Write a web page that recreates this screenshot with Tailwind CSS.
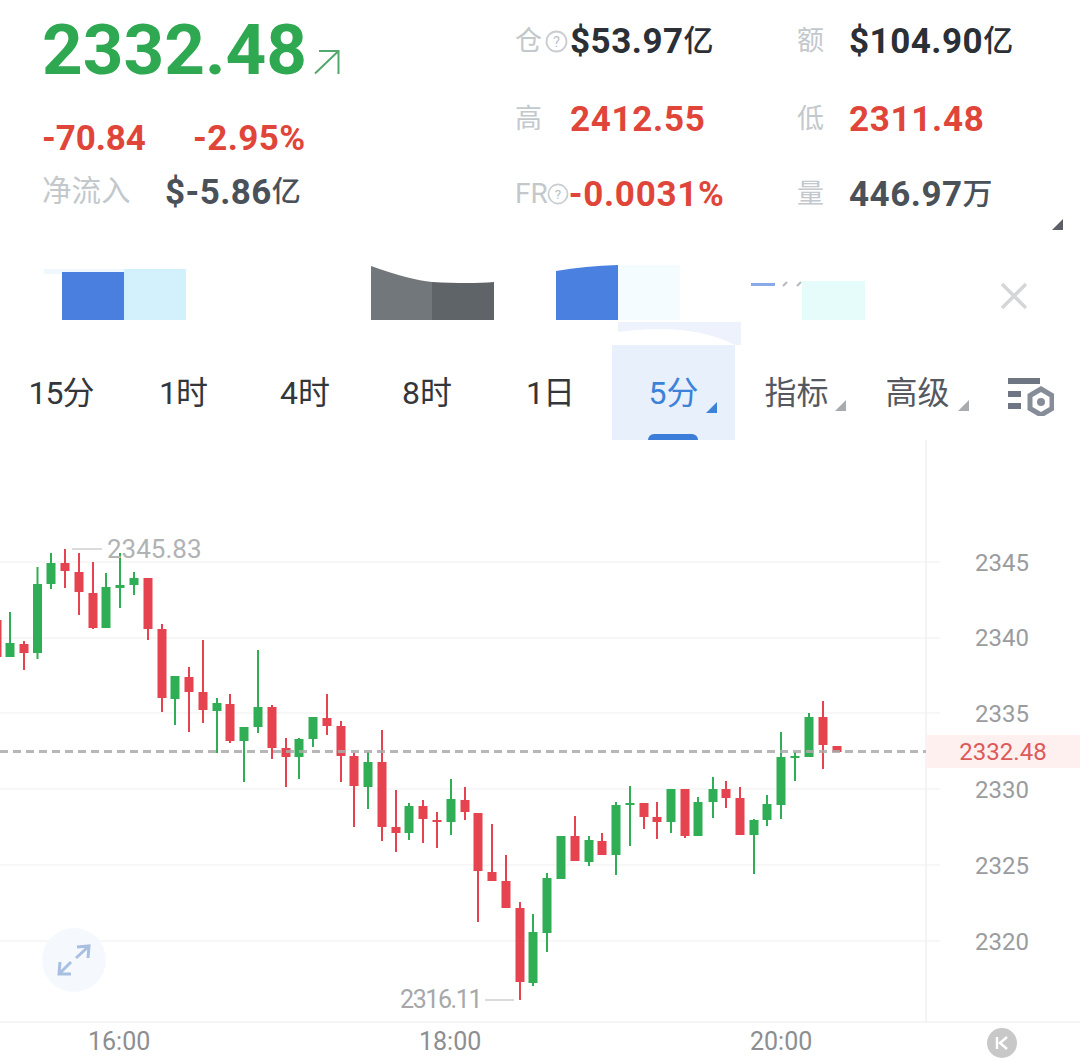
<!DOCTYPE html>
<html lang="en">
<head>
    <meta charset="UTF-8">
    <meta name="viewport" content="width=device-width, initial-scale=1.0">
    <title>ETH Chart</title>
    <script src="https://cdn.jsdelivr.net/npm/@tailwindcss/browser@4"></script>
</head>
<body class="bg-white">
    <div class="w-[1080px] h-[1061px] overflow-hidden flex flex-col bg-white font-['Roboto','Noto_Sans_CJK_SC',sans-serif]">

        <!-- header -->
        <div class="h-[250px] flex relative">
            <div class="w-[515px] pl-[42px] flex flex-col">
                <div class="h-[98px] flex items-center">
                    <span class="text-[71px] font-bold text-[#2fa852] leading-none">2332.48</span>
                    <svg class="ml-[7px] mt-[26px]" width="26" height="26" viewBox="0 0 26 26" fill="none" stroke="#52a86e" stroke-width="2"><path d="M1 24.5 L24.5 2 M5 2 H24.5 V25"/></svg>
                </div>
                <div class="h-[80px] flex items-center text-[35px] font-bold text-[#e0453a] leading-none">
                    <span class="w-[151px] tracking-[-0.1px]">-70.84</span>
                    <span class="tracking-[0.4px]">-2.95%</span>
                </div>
                <div class="h-[28px] flex items-center leading-none">
                    <span class="w-[123px] text-[29.5px] text-[#c3c8cc]">净流入</span>
                    <span class="text-[35px] font-bold text-[#4b5159] tracking-[0.4px]">$-5.86</span><span class="text-[29px] font-medium text-[#4b5159]">亿</span>
                </div>
            </div>
            <div class="flex-1 pt-[2px] flex flex-col leading-none">
                <div class="h-[78px] flex items-center">
                    <div class="w-[282px] flex items-center">
                        <span class="text-[27px] text-[#c3c8cc]">仓</span>
                        <svg class="ml-[3px]" width="23" height="23" viewBox="0 0 23 23"><circle cx="11.5" cy="11.5" r="10" fill="none" stroke="#c9cdd1" stroke-width="1.8"/><text x="11.5" y="16.5" text-anchor="middle" font-size="14" fill="#b9bec3" font-family="Roboto">?</text></svg>
                        <span class="ml-[2px] text-[35px] font-bold text-[#2b2f36] tracking-[0.5px]">$53.97</span><span class="text-[30px] font-medium text-[#2b2f36]">亿</span>
                    </div>
                    <div class="flex items-center">
                        <span class="w-[52px] text-[27px] text-[#c3c8cc]">额</span>
                        <span class="text-[35px] font-bold text-[#2b2f36] tracking-[0.5px]">$104.90</span><span class="text-[30px] font-medium text-[#2b2f36]">亿</span>
                    </div>
                </div>
                <div class="h-[78px] flex items-center">
                    <div class="w-[282px] flex items-center">
                        <span class="w-[55px] text-[27px] text-[#c3c8cc]">高</span>
                        <span class="text-[35px] font-bold text-[#e0453a] tracking-[0.7px]">2412.55</span>
                    </div>
                    <div class="flex items-center">
                        <span class="w-[52px] text-[27px] text-[#c3c8cc]">低</span>
                        <span class="text-[35px] font-bold text-[#e0453a] tracking-[0.7px]">2311.48</span>
                    </div>
                </div>
                <div class="h-[72px] flex items-center">
                    <div class="w-[282px] flex items-center">
                        <span class="text-[28px] text-[#c3c8cc]">FR</span>
                        <svg class="-ml-[1px]" width="22" height="22" viewBox="0 0 23 23"><circle cx="11.5" cy="11.5" r="10" fill="none" stroke="#c9cdd1" stroke-width="1.8"/><text x="11.5" y="16.5" text-anchor="middle" font-size="14" fill="#b9bec3" font-family="Roboto">?</text></svg>
                        <span class="text-[35px] font-bold text-[#e0453a] tracking-[0.7px]">-0.0031%</span>
                    </div>
                    <div class="flex items-center">
                        <span class="w-[52px] text-[27px] text-[#c3c8cc]">量</span>
                        <span class="text-[35px] font-bold text-[#4b5159] tracking-[0.5px]">446.97</span><span class="text-[30px] font-medium text-[#4b5159]">万</span>
                    </div>
                </div>
            </div>
            <svg class="absolute left-[1052px] top-[218px]" width="12" height="13" viewBox="0 0 12 13"><path d="M11 1 V12 H0 Z" fill="#5c6066"/></svg>
        </div>

        <!-- blurred banner strip -->
        <svg class="h-[95px] w-[1080px]" viewBox="0 250 1080 95">
            <rect x="44" y="269" width="142" height="5" fill="#eef8fe"/>
            <rect x="62" y="272" width="62" height="48" fill="#4a7fe0"/>
            <rect x="124" y="269" width="62" height="51" fill="#d2f1fd"/>
            <path d="M371 266 Q410 280 432 282 V320 H371 Z" fill="#72777b"/>
            <path d="M432 282 Q470 284 494 282 V320 H432 Z" fill="#5f6469"/>
            <path d="M556 271 Q585 266 618 265 V320 H556 Z" fill="#4a80e0"/>
            <rect x="618" y="265" width="62" height="55" fill="#f5fcff"/>
            <rect x="802" y="281" width="63" height="39" fill="#e6fcfb"/>
            <rect x="751" y="283" width="24" height="3" fill="#8aa9e8"/>
            <path d="M783 286 L787 282 M797 286 L801 282" stroke="#b5b9bd" stroke-width="2"/>
            <path d="M618 322 H741 V345 L735 345 Q690 322 618 332 Z" fill="#edf2fc"/>
            <path d="M1002 284 L1026 308 M1026 284 L1002 308" stroke="#d5d6d8" stroke-width="3.5"/>
        </svg>

        <!-- period tabs -->
        <div class="h-[95px] flex items-center relative text-[32px] text-[#33363b] leading-none">
            <div class="w-[122px] text-center tracking-[-1px]">15分</div>
            <div class="w-[122px] text-center tracking-[-1px]">1时</div>
            <div class="w-[122px] text-center">4时</div>
            <div class="w-[122px] text-center">8时</div>
            <div class="w-[124px] text-center tracking-[-1px]">1日</div>
            <div class="w-[123px] h-[95px] bg-[#e8f0fb] flex items-center justify-center text-[#3b82d8] relative">
                5分
                <svg class="absolute left-[94px] top-[56px]" width="12" height="12" viewBox="0 0 12 12"><path d="M11 1 V12 H0 Z" fill="#3b82d8"/></svg>
                <div class="absolute left-[36px] bottom-0 w-[50px] h-[6px] rounded-t-md bg-[#3b7dd8]"></div>
            </div>
            <div class="w-[123px] text-center text-[#55595f] relative">
                指标
                <svg class="absolute left-[100px] top-[22px]" width="12" height="12" viewBox="0 0 12 12"><path d="M11 1 V12 H0 Z" fill="#a9acaf"/></svg>
            </div>
            <div class="w-[119px] text-center text-[#55595f] relative">
                高级
                <svg class="absolute left-[100px] top-[22px]" width="12" height="12" viewBox="0 0 12 12"><path d="M11 1 V12 H0 Z" fill="#a9acaf"/></svg>
            </div>
            <svg class="ml-[31px] mt-[8px]" width="46" height="38" viewBox="0 0 46 38">
                <rect x="0" y="0" width="32" height="6" fill="#6e7684"/>
                <rect x="0" y="13" width="13" height="6" fill="#6e7684"/>
                <rect x="0" y="25" width="13" height="6" fill="#6e7684"/>
                <path d="M33 11 L44 17.5 V30.5 L33 37 L22 30.5 V17.5 Z" fill="none" stroke="#868d99" stroke-width="5"/>
                <circle cx="33" cy="24" r="4" fill="#868d99"/>
            </svg>
        </div>

        <!-- chart -->
        <div class="relative flex-1">
            <svg id="chart" class="absolute inset-0" width="1080" height="621" viewBox="0 440 1080 621"></svg>

            <span class="absolute left-[107px] top-[94px] text-[26px] leading-[30px] text-[#b0b2b4]">2345.83</span>
            <span class="absolute left-[400px] top-[545px] text-[25px] leading-[30px] tracking-[-1.4px] text-[#a6a8aa]">2316.11</span>

            <span class="absolute left-[975px] top-[108px] text-[24px] leading-[30px] text-[#9a9c9f]">2345</span>
            <span class="absolute left-[975px] top-[183px] text-[24px] leading-[30px] text-[#9a9c9f]">2340</span>
            <span class="absolute left-[975px] top-[259px] text-[24px] leading-[30px] text-[#9a9c9f]">2335</span>
            <span class="absolute left-[975px] top-[335px] text-[24px] leading-[30px] text-[#9a9c9f]">2330</span>
            <span class="absolute left-[975px] top-[411px] text-[24px] leading-[30px] text-[#9a9c9f]">2325</span>
            <span class="absolute left-[975px] top-[487px] text-[24px] leading-[30px] text-[#9a9c9f]">2320</span>

            <div class="absolute left-[926px] top-[295px] w-[154px] h-[33px] bg-[#fdf0ef] flex items-center justify-center text-[24px] text-[#dc5a5a] leading-none">2332.48</div>

            <span class="absolute left-[88px] top-[587px] text-[25px] leading-[30px] text-[#8c8e91]">16:00</span>
            <span class="absolute left-[419px] top-[587px] text-[25px] leading-[30px] text-[#8c8e91]">18:00</span>
            <span class="absolute left-[750px] top-[587px] text-[25px] leading-[30px] text-[#8c8e91]">20:00</span>

            <div class="absolute left-[42px] top-[488px] w-[64px] h-[64px] rounded-full bg-[#f5f9fe] flex items-center justify-center">
                <svg width="36" height="36" viewBox="0 0 36 36" fill="none" stroke="#a9bfe0" stroke-width="3"><path d="M21 5 L33 4 L32 16 M33 4 L20 16 M4 20 L3 32 L15 32 M3 32 L15 20"/></svg>
            </div>
            <div class="absolute left-[987px] top-[588px] w-[30px] h-[30px] rounded-full bg-[#c8c8c8] flex items-center justify-center">
                <svg width="16" height="16" viewBox="0 0 16 16" fill="none" stroke="#ffffff" stroke-width="2.4"><path d="M3 2 V14 M13 2 L6 8 L13 14"/></svg>
            </div>
        </div>
    </div>

    <script>
        // x, high, low, body top, body bottom, up (1 = green)
        const candles = [
            [-3,605,657,620,657,0],[10,612,657,643,657,1],[24,641,670,644,653,0],[37.5,567,659,584,653,1],
            [51,553,589,563,584,1],[65,549,588,563,571,0],[79,553,615,572,592,0],[93,562,629,593,628,0],
            [106,573,628,587,628,1],[120,553,608,585,588,1],[134,572,595,578,585,1],[148,578,640,578,629,0],
            [162,624,712,629,698,0],[175,676,725,676,699,1],[189,667,732,677,692,0],[203,640,723,692,710,0],
            [217,698,753,703,711,1],[230,694,743,704,741,0],[244,727,782,727,741,1],[258,650,733,707,727,1],
            [272,705,759,707,748,0],[286,738,787,748,757,0],[299,738,779,739,757,1],[313,717,747,717,739,1],
            [327,694,735,718,726,0],[341,721,782,726,756,0],[354,753,827,756,786,0],[368,752,809,762,787,1],
            [382,730,841,762,827,0],[396,790,852,827,833,0],[409,803,840,806,833,1],[423,800,843,806,819,0],
            [437,812,848,820,822,0],[451,779,835,799,822,1],[465,787,820,800,812,0],[478,813,922,813,871,0],
            [492,824,881,872,881,0],[506,855,908,881,908,0],[520,902,1000,908,982,0],[533,914,986,932,983,1],
            [547,873,952,878,933,1],[561,836,879,836,879,1],[575,816,861,836,861,0],[589,836,866,840,862,1],
            [602,833,855,841,855,0],[616,802,875,805,855,1],[630,786,846,803,805,1],[644,803,829,803,817,0],
            [657,802,839,817,822,0],[671,789,833,789,822,1],[685,789,838,789,836,0],[698,797,836,802,836,1],
            [713,777,818,789,802,1],[726,781,808,789,798,0],[740,787,835,798,835,0],[754,819,874,820,835,1],
            [767,795,826,804,820,1],[781,732,819,757,805,1],[795,752,781,756,758,1],[809,713,757,717,757,1],
            [823,701,769,717,745,0],[837,746,752,746,752,0]
        ];

        const svgNs = 'http://www.w3.org/2000/svg';
        const chart = document.getElementById('chart');

        function add(tag, attrs) {
            const el = document.createElementNS(svgNs, tag);
            for (const k in attrs) el.setAttribute(k, attrs[k]);
            chart.appendChild(el);
        }

        [562, 638, 713, 789, 865, 941].forEach(y => {
            add('line', { x1: 0, x2: 940, y1: y, y2: y, stroke: '#f5f5f5', 'stroke-width': 1.5 });
        });
        add('line', { x1: 926, x2: 926, y1: 440, y2: 1023, stroke: '#f0f0f0', 'stroke-width': 1.5 });
        add('line', { x1: 0, x2: 1080, y1: 1022, y2: 1022, stroke: '#f2f2f2', 'stroke-width': 1.5 });
        add('line', { x1: 72, x2: 102, y1: 549, y2: 549, stroke: '#cfcfcf', 'stroke-width': 1.5 });
        add('line', { x1: 485, x2: 514, y1: 1000, y2: 1000, stroke: '#cfcfcf', 'stroke-width': 1.5 });

        candles.forEach(([x, hi, lo, top, bot, up]) => {
            const color = up ? '#2fae55' : '#e5434f';
            add('rect', { x: x - 1, y: hi, width: 2, height: lo - hi, fill: color });
            add('rect', { x: x - 4.5, y: top, width: 9, height: bot - top, fill: color });
        });

        add('line', { x1: 0, x2: 926, y1: 751.5, y2: 751.5, stroke: '#aaaaaa', 'stroke-opacity': 0.85, 'stroke-width': 3, 'stroke-dasharray': '8 5' });
    </script>
</body>
</html>
